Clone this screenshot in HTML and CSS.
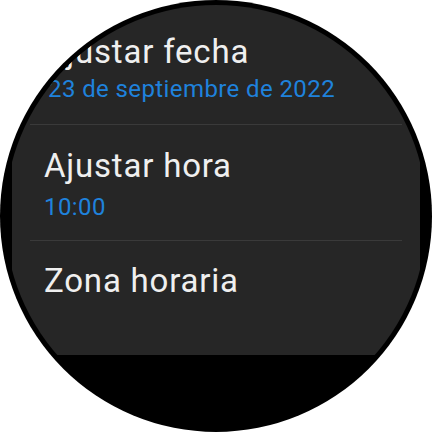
FILE: index.html
```html
<!DOCTYPE html>
<html lang="es">
<head>
<meta charset="utf-8">
<link rel="stylesheet" href="styles.css">
</head>
<body>
<div class="watch">
  <div class="panel">
    <div class="item item-first">
      <div class="title">Ajustar fecha</div>
      <div class="sub">23 de septiembre de 2022</div>
    </div>
    <div class="sep"></div>
    <div class="item">
      <div class="title">Ajustar hora</div>
      <div class="sub">10:00</div>
    </div>
    <div class="sep"></div>
    <div class="item item-last">
      <div class="title">Zona horaria</div>
    </div>
  </div>
</div>
</body>
</html>
```
FILE: styles.css
```css
html, body {
  margin: 0;
  padding: 0;
  background: #ffffff;
}
.watch {
  width: 432px;
  height: 432px;
  border-radius: 50%;
  background: #000000;
  overflow: hidden;
  font-family: Roboto, "Noto Sans", sans-serif;
}
.panel {
  margin: 0 12px;
  height: 355px;
  background: #262626;
  border-radius: 0 0 6px 6px;
  clip-path: circle(211px at 204px 216px);
  display: flex;
  flex-direction: column;
}
.item {
  padding: 22px 0 19px 32px;
}
.item-first {
  padding-top: 33px;
  padding-bottom: 21px;
}
.item-last {
  padding-top: 21px;
}
.title {
  color: #efefef;
  font-size: 33px;
  line-height: 38px;
  letter-spacing: 0.8px;
}
.sub {
  color: #1f82dc;
  font-size: 24px;
  line-height: 28px;
  margin-top: 8px;
  letter-spacing: 0.4px;
}
.item-first .sub {
  margin-top: 4px;
  padding-left: 4px;
}
.sep {
  height: 1px;
  margin: 0 18px;
  background: #3a3a3a;
}
```
